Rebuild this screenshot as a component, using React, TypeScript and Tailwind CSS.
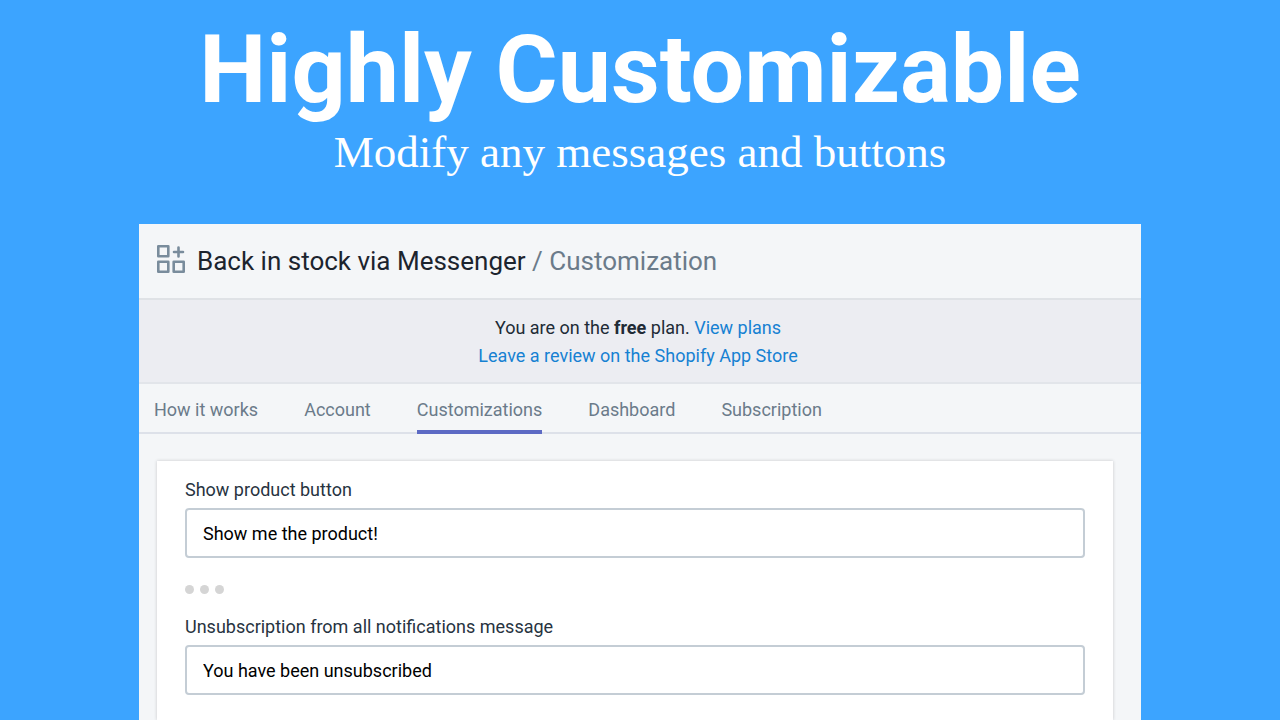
import React, { useState } from "react";

const tabs = [
  "How it works",
  "Account",
  "Customizations",
  "Dashboard",
  "Subscription",
];

function AppsIcon() {
  return (
    <svg
      width="28"
      height="28"
      viewBox="0 0 28 28"
      fill="none"
      stroke="#798c9c"
      strokeWidth="2.6"
      strokeLinejoin="round"
      aria-hidden="true"
    >
      <rect x="1.3" y="1.3" width="10" height="10" />
      <rect x="1.3" y="16.7" width="10" height="10" />
      <rect x="16.7" y="16.7" width="10" height="10" />
      <path d="M21.5 2.5v9M17 7h9" strokeLinecap="round" />
    </svg>
  );
}

type FieldProps = {
  id: string;
  label: string;
  value: string;
  onChange: (value: string) => void;
};

function Field({ id, label, value, onChange }: FieldProps) {
  return (
    <div className="flex flex-col gap-1">
      <label htmlFor={id} className="text-[18px] leading-7 text-[#27333f]">
        {label}
      </label>
      <input
        id={id}
        type="text"
        value={value}
        onChange={(e) => onChange(e.target.value)}
        className="h-[50px] w-full rounded-[4px] border-2 border-[#c4cdd5] bg-white px-4 text-[18px] text-black"
      />
    </div>
  );
}

export default function App() {
  const [activeTab, setActiveTab] = useState("Customizations");
  const [productButton, setProductButton] = useState("Show me the product!");
  const [unsubscribed, setUnsubscribed] = useState(
    "You have been unsubscribed"
  );

  return (
    <div className="flex min-h-screen flex-col items-center bg-[#3ca4ff] font-['Roboto',sans-serif]">
      <div className="flex flex-col items-center pt-4 pb-11 text-center text-white">
        <h1 className="text-[95px] leading-[108px] font-bold">
          Highly Customizable
        </h1>
        <p className="font-['Liberation_Serif',serif] text-[45px] leading-[56px]">
          Modify any messages and buttons
        </p>
      </div>

      <main className="flex w-full max-w-[1002px] grow flex-col bg-[#f4f6f8]">
        <header className="flex h-[76px] items-center gap-3 border-b-2 border-[#dfe2e6] px-[18px] pb-1">
          <AppsIcon />
          <h2 className="pt-1 text-[26px] leading-8 text-[#1c242e]">
            Back in stock via Messenger{" "}
            <span className="text-[#6b7b8a]">/ Customization</span>
          </h2>
        </header>

        <div className="border-b-2 border-[#e2e5ea] bg-[#ecedf2] pt-[14px] pr-1 pb-3 text-center text-[18px] leading-7 text-[#212b36]">
          <p>
            You are on the <b>free</b> plan.{" "}
            <a href="#plans" className="text-[#1681d2]">
              View plans
            </a>
          </p>
          <a href="#review" className="text-[#1681d2]">
            Leave a review on the Shopify App Store
          </a>
        </div>

        <nav className="flex h-[50px] gap-[46px] border-b-2 border-[#dde1e9] px-[15px]">
          {tabs.map((tab) => (
            <button
              key={tab}
              type="button"
              onClick={() => setActiveTab(tab)}
              className={
                tab === activeTab
                  ? "-mb-[2px] border-b-4 border-[#5c6ac4] pt-1 text-[18px] text-[#6b7b8a]"
                  : "-mb-[2px] border-b-4 border-transparent pt-1 text-[18px] text-[#6b7b8a]"
              }
            >
              {tab}
            </button>
          ))}
        </nav>

        <section className="mt-[27px] mr-7 ml-[18px] flex grow flex-col bg-white px-7 pt-[15px] pb-6 shadow-[0_0_3px_rgba(63,63,68,0.25)]">
          <Field
            id="product-button"
            label="Show product button"
            value={productButton}
            onChange={setProductButton}
          />
          <div className="flex gap-[6px] pt-[27px] pb-[19px]">
            <span className="size-[9px] rounded-full bg-[#d5d5d5]" />
            <span className="size-[9px] rounded-full bg-[#d5d5d5]" />
            <span className="size-[9px] rounded-full bg-[#d5d5d5]" />
          </div>
          <Field
            id="unsubscribed"
            label="Unsubscription from all notifications message"
            value={unsubscribed}
            onChange={setUnsubscribed}
          />
        </section>
      </main>
    </div>
  );
}
